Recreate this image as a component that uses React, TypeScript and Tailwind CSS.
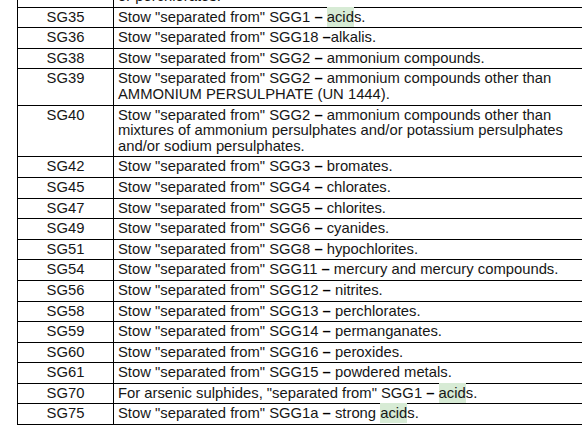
const Acid = () => <span className="bg-[#d7ebd5] py-[2px]">acid</span>;

const Dash = () => <span className="font-black text-black">–</span>;

type Row = { code: string; text: React.ReactNode };

const rows: Row[] = [
    { code: "SG35", text: <>Stow "separated from" SGG1 <Dash /> <Acid />s.</> },
    { code: "SG36", text: <>Stow "separated from" SGG18 <Dash />alkalis.</> },
    { code: "SG38", text: <>Stow "separated from" SGG2 <Dash /> ammonium compounds.</> },
    {
        code: "SG39",
        text: (
            <>
                Stow "separated from" SGG2 <Dash /> ammonium compounds other than
                <br />
                AMMONIUM PERSULPHATE (UN 1444).
            </>
        ),
    },
    {
        code: "SG40",
        text: (
            <>
                Stow "separated from" SGG2 <Dash /> ammonium compounds other than
                <br />
                mixtures of ammonium persulphates and/or potassium persulphates
                <br />
                and/or sodium persulphates.
            </>
        ),
    },
    { code: "SG42", text: <>Stow "separated from" SGG3 <Dash /> bromates.</> },
    { code: "SG45", text: <>Stow "separated from" SGG4 <Dash /> chlorates.</> },
    { code: "SG47", text: <>Stow "separated from" SGG5 <Dash /> chlorites.</> },
    { code: "SG49", text: <>Stow "separated from" SGG6 <Dash /> cyanides.</> },
    { code: "SG51", text: <>Stow "separated from" SGG8 <Dash /> hypochlorites.</> },
    { code: "SG54", text: <>Stow "separated from" SGG11 <Dash /> mercury and mercury compounds.</> },
    { code: "SG56", text: <>Stow "separated from" SGG12 <Dash /> nitrites.</> },
    { code: "SG58", text: <>Stow "separated from" SGG13 <Dash /> perchlorates.</> },
    { code: "SG59", text: <>Stow "separated from" SGG14 <Dash /> permanganates.</> },
    { code: "SG60", text: <>Stow "separated from" SGG16 <Dash /> peroxides.</> },
    { code: "SG61", text: <>Stow "separated from" SGG15 <Dash /> powdered metals.</> },
    { code: "SG70", text: <>For arsenic sulphides, "separated from" SGG1 <Dash /> <Acid />s.</> },
    { code: "SG75", text: <>Stow "separated from" SGG1a <Dash /> strong <Acid />s.</> },
];

export default function App() {
    return (
        <div className="h-[436px] w-[582px] overflow-hidden bg-white font-['Liberation_Sans',Arial,sans-serif] text-[14.8px] leading-[15.6px] text-[#161616]">
            <table className="-mt-[14px] ml-[17px] w-[600px] table-fixed border-collapse">
                <colgroup>
                    <col className="w-[96px]" />
                    <col />
                </colgroup>
                <tbody>
                    <tr>
                        <td className="border border-black py-[2px]"></td>
                        <td className="border border-black py-[2px] pl-[4px]">or perchlorates.</td>
                    </tr>
                    {rows.map((r) => (
                        <tr key={r.code}>
                            <td className="border border-black py-[2px] text-center align-top">{r.code}</td>
                            <td className="border border-black py-[2px] pl-[4px] align-top whitespace-nowrap">{r.text}</td>
                        </tr>
                    ))}
                </tbody>
            </table>
        </div>
    );
}
